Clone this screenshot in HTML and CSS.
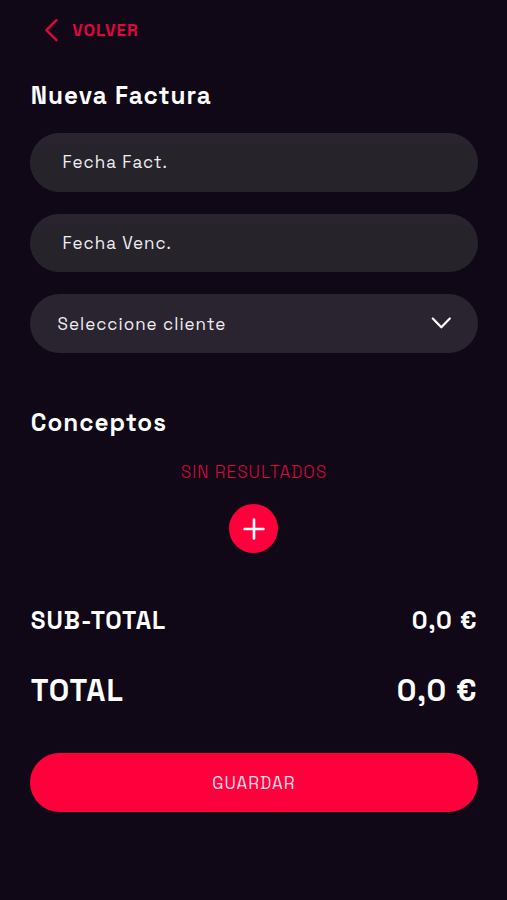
FILE: index.html
```html
<!DOCTYPE html>
<html lang="es">
<head>
<meta charset="utf-8">
<meta name="viewport" content="width=device-width, initial-scale=1">
<title>Nueva Factura</title>
<link rel="stylesheet" href="styles.css">
</head>
<body>
<main class="screen">
  <a class="back">
    <svg class="back-icon" width="14" height="24" viewBox="0 0 14 24" fill="none" stroke="currentColor" stroke-width="2.4" stroke-linecap="round" stroke-linejoin="round"><path d="M12.4 2.2 2.4 12.2l10 10"/></svg>
    <span class="back-label">VOLVER</span>
  </a>
  <h1 class="title title-invoice">Nueva Factura</h1>
  <form class="fields">
    <div class="field"><span class="date-issued">Fecha Fact.</span></div>
    <div class="field"><span class="date-due">Fecha Venc.</span></div>
    <div class="field field-select">
      <span class="client">Seleccione cliente</span>
      <svg class="chevron" width="20" height="12" viewBox="0 0 20 12" fill="none" stroke="#fff" stroke-width="2.2" stroke-linecap="round" stroke-linejoin="round"><path d="m1.8 1.5 8.5 8.8 8.5-8.8"/></svg>
    </div>
  </form>
  <h2 class="title title-items">Conceptos</h2>
  <p class="empty"><span>SIN RESULTADOS</span></p>
  <button class="add" type="button" aria-label="Añadir">
    <svg width="22" height="22" viewBox="0 0 22 22" fill="none" stroke="#fff" stroke-width="2.6" stroke-linecap="round"><path d="M11 1.6v18.8M1.6 11h18.8"/></svg>
  </button>
  <div class="row subtotal"><span class="row-label">SUB-TOTAL</span><span class="amount">0,0 €</span></div>
  <div class="row total"><span class="row-label">TOTAL</span><span class="amount">0,0 €</span></div>
  <button class="save" type="button"><span>GUARDAR</span></button>
</main>
</body>
</html>
```
FILE: styles.css
```css
* { box-sizing: border-box; }
body {
  margin: 0;
  background: #100817;
  color: #fff;
  font-family: "Space Grotesk", Inter, "Liberation Sans", sans-serif;
  font-size: 17px;
  letter-spacing: 1px;
}
.screen {
  display: flex;
  flex-direction: column;
  min-height: 900px;
  padding: 18px 29.5px 0 30.3px;
}
.back {
  display: flex;
  align-items: center;
  gap: 14.5px;
  height: 24px;
  padding-left: 13.4px;
  color: #e2063d;
}
.back-label { font-weight: 600; }
.title {
  margin: 0;
  height: 30px;
  line-height: 30px;
  padding-left: 0.5px;
  font-size: 24.3px;
  font-weight: 700;
  white-space: nowrap;
}
.title-invoice { margin-top: 39px; }
.title-items { margin-top: 55.4px; }
.fields { display: flex; flex-direction: column; gap: 22px; margin-top: 22px; }
.field {
  display: flex;
  align-items: center;
  height: 58.7px;
  padding: 0 27px 0 32.2px;
  border-radius: 30px;
  background: linear-gradient(#2a242f, #26232b 35%);
  color: #f1edf4;
}
.field-select { justify-content: space-between; padding-left: 27.2px; background: #2a2430; }
.chevron { margin-bottom: 2px; }
.empty {
  margin: 23.1px 0 0;
  height: 20px;
  line-height: 20px;
  text-align: center;
  font-weight: 300;
  color: #dc063d;
}
.add {
  display: flex;
  align-items: center;
  justify-content: center;
  align-self: center;
  width: 49px;
  height: 49px;
  margin-top: 22.5px;
  padding: 0;
  border: 0;
  border-radius: 50%;
  background: #ff003c;
}
.row { display: flex; justify-content: space-between; font-weight: 700; height: 36px; line-height: 36px; }
.row-label { padding-left: 0.5px; }
.subtotal { margin-top: 50px; font-size: 24.3px; }
.total { margin-top: 34px; font-size: 30.3px; }
.save {
  height: 58.7px;
  margin-top: 44px;
  padding-top: 2.5px;
  border: 0;
  border-radius: 30px;
  background: #ff003c;
  color: #ffdce5;
  font: inherit;
  letter-spacing: inherit;
}
```
